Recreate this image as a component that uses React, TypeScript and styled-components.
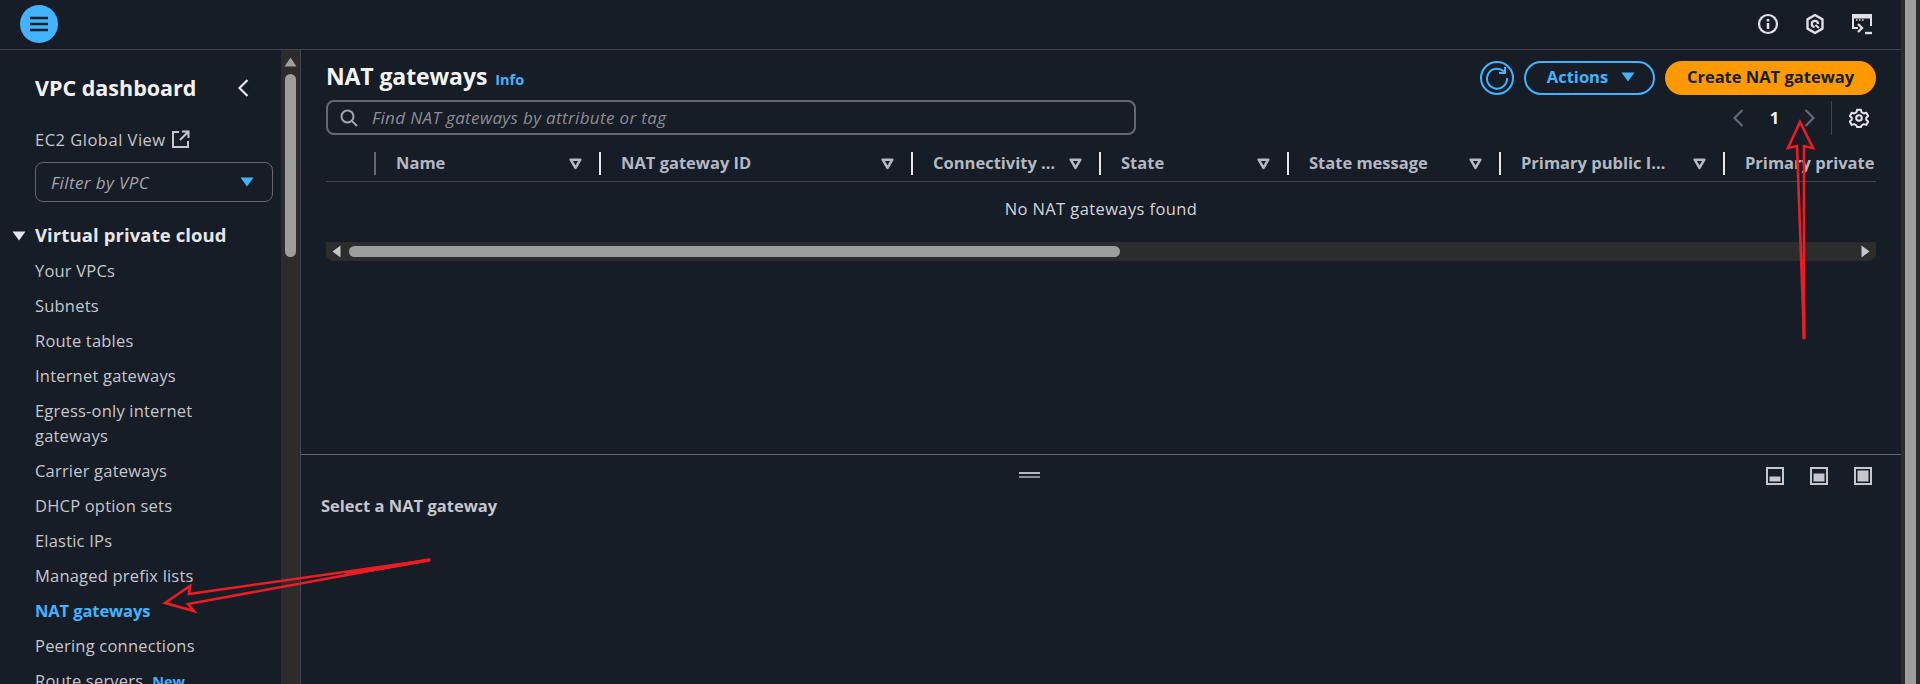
import React from "react";
import styled, { createGlobalStyle } from "styled-components";

const Global = createGlobalStyle`
  html, body { margin: 0; padding: 0; height: 684px; overflow: hidden; background: #161d26; }
  body { font-family: "Open Sans", "Noto Sans", sans-serif; color: #c6c6cd; }
  * { box-sizing: border-box; }
`;

const Page = styled.div`
  position: relative;
  display: flex;
  width: 1920px;
  height: 684px;
  overflow: hidden;
  background: #161d26;
`;
const Content = styled.div`
  flex: 1;
  min-width: 0;
  display: flex;
  flex-direction: column;
`;
const PageScroll = styled.div`
  width: 19px;
  flex: none;
  padding-left: 4px;
  background: #2c2c2c;
`;
const PageThumb = styled.div`
  width: 11px;
  height: 100%;
  background: #9e9e9e;
`;
const TopBar = styled.header`
  height: 50px;
  flex: none;
  display: flex;
  align-items: center;
  justify-content: space-between;
  padding: 0 28px 4px 20px;
  border-bottom: 1px solid #424650;
`;
const MenuButton = styled.div`
  width: 38px;
  height: 38px;
  border-radius: 50%;
  background: #42b4ff;
  display: flex;
  align-items: center;
  justify-content: center;
  margin-top: 3px;
`;
const TopIcons = styled.div`
  display: flex;
  gap: 26px;
  align-items: center;
  margin-top: 3px;
  color: #e0e0e5;
`;
const Body = styled.div`
  flex: 1;
  min-height: 0;
  display: flex;
`;
const Sidebar = styled.nav`
  width: 281px;
  flex: none;
  overflow: hidden;
  padding: 24px 8px 0 35px;
  position: relative;
`;
const SideHead = styled.div`
  display: flex;
  align-items: center;
  justify-content: space-between;
  height: 28px;
  padding-right: 24px;
`;
const SideTitle = styled.div`
  margin-top: -2px;
  font-size: 21.5px;
  font-weight: 700;
  color: #f3f3f7;
`;
const GlobalLink = styled.div`
  display: flex;
  align-items: center;
  gap: 6px;
  margin-top: 26px;
  height: 22px;
  font-size: 16.5px;
  letter-spacing: 0.5px;
`;
const FilterBox = styled.div`
  width: 238px;
  height: 40px;
  margin-top: 12px;
  border: 1px solid #656871;
  border-radius: 8px;
  display: flex;
  align-items: center;
  justify-content: space-between;
  padding: 0 17px 0 15px;
  font-style: italic;
  font-size: 17px;
  letter-spacing: 0.4px;
  color: #a4a4ad;
`;
const SectionHead = styled.div`
  display: flex;
  align-items: center;
  margin-top: 20px;
  height: 24px;
  font-size: 18.5px;
  font-weight: 700;
  letter-spacing: 0.1px;
  color: #e6e6ea;
`;
const Caret = styled.svg`
  position: absolute;
  left: 12px;
  top: 181px;
`;
const NavList = styled.div`
  margin-top: 12px;
  display: flex;
  flex-direction: column;
  gap: 10px;
`;
const NavItem = styled.div<{ $active?: boolean }>`
  line-height: 25px;
  width: 200px;
  font-size: 16.5px;
  letter-spacing: ${(p) => (p.$active ? "-0.1px" : "0.2px")};
  font-weight: ${(p) => (p.$active ? 700 : 400)};
  color: ${(p) => (p.$active ? "#42b4ff" : "#c6c6cd")};
`;
const NewTag = styled.span`
  margin-left: 9px;
  font-size: 14.5px;
  font-weight: 700;
  letter-spacing: 0;
  color: #42b4ff;
`;
const SideScroll = styled.div`
  width: 19px;
  flex: none;
  background: #2c2c2c;
  display: flex;
  flex-direction: column;
  align-items: center;
  padding-top: 7px;
`;
const SideThumb = styled.div`
  width: 11px;
  height: 183px;
  margin-top: 7px;
  border-radius: 6px;
  background: #9e9e9e;
`;
const Main = styled.main`
  flex: 1;
  min-width: 0;
  display: flex;
  flex-direction: column;
  border-left: 1px solid #424650;
`;
const ListPane = styled.section`
  height: 405px;
  flex: none;
  padding: 11px 25px 0 25px;
  display: flex;
  flex-direction: column;
  border-bottom: 1px solid #656871;
`;
const PaneTop = styled.div`
  display: flex;
  justify-content: space-between;
  align-items: flex-start;
  height: 35px;
`;
const TitleWrap = styled.div`
  display: flex;
  align-items: baseline;
  gap: 8px;
`;
const Title = styled.h1`
  margin: 0;
  font-size: 23px;
  font-weight: 700;
  letter-spacing: -0.1px;
  color: #f3f3f7;
  line-height: 30px;
`;
const InfoLink = styled.span`
  font-size: 14.5px;
  font-weight: 700;
  color: #42b4ff;
`;
const Actions = styled.div`
  display: flex;
  align-items: center;
  gap: 10px;
`;
const RefreshButton = styled.div`
  width: 34px;
  height: 34px;
  border: 2px solid #42b4ff;
  border-radius: 50%;
  display: flex;
  align-items: center;
  justify-content: center;
`;
const OutlineButton = styled.div`
  width: 131px;
  height: 34px;
  border: 2px solid #42b4ff;
  border-radius: 17px;
  display: flex;
  align-items: center;
  justify-content: center;
  gap: 12px;
  padding: 0 0 3px 4px;
  color: #42b4ff;
  font-size: 16.5px;
  font-weight: 700;
`;
const PrimaryButton = styled.div`
  width: 211px;
  height: 34px;
  border-radius: 17px;
  background: #ff9900;
  display: flex;
  align-items: center;
  justify-content: center;
  padding-bottom: 3px;
  color: #161d26;
  font-size: 16.5px;
  font-weight: 700;
`;
const ToolRow = styled.div`
  display: flex;
  justify-content: space-between;
  align-items: center;
  height: 35px;
  margin-top: 4px;
`;
const SearchBox = styled.div`
  width: 810px;
  height: 35px;
  border: 2px solid #656871;
  border-radius: 8px;
  display: flex;
  align-items: center;
  gap: 14px;
  padding-left: 12px;
  font-style: italic;
  font-size: 17px;
  letter-spacing: 0.35px;
  color: #8c8c94;
`;
const Pager = styled.div`
  display: flex;
  align-items: center;
  height: 34px;
  padding-right: 7px;
`;
const PageNum = styled.span`
  width: 60px;
  padding-left: 1px;
  text-align: center;
  font-size: 16.5px;
  font-weight: 700;
  color: #f3f3f7;
`;
const PagerDivider = styled.div`
  width: 1px;
  height: 34px;
  margin: 0 17px 0 16px;
  background: #424650;
`;
const HeaderRow = styled.div`
  display: flex;
  height: 47px;
  padding-top: 17px;
  border-bottom: 1px solid #424650;
  width: 1550px;
`;
const Cell = styled.div<{ $w: number }>`
  flex: none;
  width: ${(p) => p.$w}px;
  height: 23px;
  display: flex;
  align-items: center;
  padding-left: 20px;
  font-size: 16.5px;
  font-weight: 700;
  color: #b4b8c2;
`;
const CellLabel = styled.span`
  flex: 1;
  min-width: 0;
  margin-top: -2px;
  white-space: nowrap;
  overflow: hidden;
  text-overflow: ellipsis;
`;
const SortIcon = styled.svg<{ $gap: number }>`
  flex: none;
  margin: 0 17px 0 ${(p) => p.$gap}px;
`;
const ColDivider = styled.div<{ $dim?: boolean }>`
  flex: none;
  width: 2px;
  height: 23px;
  background: ${(p) => (p.$dim ? "#656871" : "#e6e6ea")};
  margin-left: auto;
`;
const EmptyRow = styled.div`
  height: 60px;
  width: 1550px;
  padding-bottom: 8px;
  display: flex;
  align-items: center;
  justify-content: center;
  font-size: 16.5px;
  letter-spacing: 0.4px;
  color: #d4d4d9;
`;
const HScroll = styled.div`
  width: 1550px;
  height: 19px;
  background: #2c2c2c;
  border-radius: 0 0 8px 8px;
  display: flex;
  align-items: center;
  padding: 0 6px;
`;
const HThumb = styled.div`
  width: 771px;
  height: 11px;
  margin-left: 8px;
  margin-right: auto;
  border-radius: 6px;
  background: #9e9e9e;
`;
const DetailPane = styled.section`
  flex: 1;
  min-height: 0;
  padding: 12px 29px 0 20px;
`;
const DetailTop = styled.div`
  position: relative;
  display: flex;
  justify-content: flex-end;
  gap: 26px;
  height: 18px;
`;
const Handle = styled.div`
  position: absolute;
  left: 698px;
  top: 5px;
  width: 21px;
  height: 6px;
  border-top: 2px solid #b4b8c2;
  border-bottom: 2px solid #8c8c94;
`;
const DetailTitle = styled.div`
  margin-top: 9px;
  font-size: 16.5px;
  font-weight: 700;
  color: #c6c6cd;
`;
const Overlay = styled.svg`
  position: absolute;
  inset: 0;
  pointer-events: none;
`;

const Tri = ({ color }: { color: string }) => (
  <svg width="16" height="12" viewBox="0 0 16 12"><path d="M1.5 1.5h13L8 10.5z" fill={color} /></svg>
);

const Sort = ({ gap }: { gap: number }) => (
  <SortIcon $gap={gap} width="13" height="12" viewBox="0 0 13 12">
    <path d="M1.7 1.7h9.6L6.5 9.8z" fill="none" stroke="#b4b8c2" strokeWidth="2.6" strokeLinejoin="round" />
  </SortIcon>
);

const Chevron = ({ dir, color }: { dir: "l" | "r"; color: string }) => (
  <svg width="11" height="18" viewBox="0 0 11 18">
    <path d={dir === "l" ? "M9.5 1 1.5 9l8 8" : "M1.5 1l8 8-8 8"} fill="none" stroke={color} strokeWidth="2.2" />
  </svg>
);

const PaneIcon = ({ h }: { h: number }) => (
  <svg width="18" height="18" viewBox="0 0 18 18">
    <rect x="1" y="1" width="16" height="16" fill="none" stroke="#c6c6cd" strokeWidth="2" />
    <rect x="3.5" y={14.5 - h} width="11" height={h} fill="#c6c6cd" />
  </svg>
);

const columns = [
  { w: 225, gap: 19, label: "Name" },
  { w: 312, gap: 19, label: "NAT gateway ID" },
  { w: 188, gap: 13, label: "Connectivity type" },
  { w: 188, gap: 19, label: "State" },
  { w: 212, gap: 19, label: "State message" },
  { w: 224, gap: 19, label: "Primary public IPv4 address" },
];

const navBefore = ["Your VPCs", "Subnets", "Route tables", "Internet gateways", "Egress-only internet gateways", "Carrier gateways", "DHCP option sets", "Elastic IPs", "Managed prefix lists"];

export default function App() {
  return (
    <Page>
      <Global />
      <Content>
        <TopBar>
          <MenuButton>
            <svg width="20" height="16" viewBox="0 0 20 16">
              <path d="M1 2h18M1 8h18M1 14h18" stroke="#161d26" strokeWidth="2.6" />
            </svg>
          </MenuButton>
          <TopIcons>
            <svg width="22" height="22" viewBox="0 0 22 22" fill="none" stroke="currentColor">
              <circle cx="11" cy="11" r="9" strokeWidth="2.2" />
              <path d="M11 10v6" strokeWidth="2.6" />
              <path d="M11 6v2.4" strokeWidth="2.6" />
            </svg>
            <svg width="20" height="22" viewBox="0 0 20 22" fill="none" stroke="currentColor" strokeWidth="2.4">
              <path d="M10 2l7.5 4.4v9.2L10 20l-7.5-4.4V6.4z" strokeLinejoin="round" />
              <path d="M14 15l-3.6-3" strokeWidth="2.2" />
              <path d="M13 11a3.1 3.1 0 1 0-3.4 3" strokeWidth="2.2" />
            </svg>
            <svg width="22" height="22" viewBox="0 0 22 22" fill="none" stroke="currentColor" strokeWidth="2">
              <path d="M7 15H2V2h18v11" />
              <path d="M2 4h18" strokeWidth="3" />
              <path d="M5 7h1.6M8 7h1.6M11 7h1.6" strokeWidth="1.6" />
              <path d="M7 11l4 4-4 4" strokeWidth="2.4" />
              <path d="M14 20h7" strokeWidth="2.4" />
            </svg>
          </TopIcons>
        </TopBar>
        <Body>
          <Sidebar>
            <SideHead>
              <SideTitle>VPC dashboard</SideTitle>
              <Chevron dir="l" color="#e6e6ea" />
            </SideHead>
            <GlobalLink>
              EC2 Global View
              <svg width="18" height="18" viewBox="0 0 18 18" fill="none" stroke="#c6c6cd" strokeWidth="2">
                <path d="M7 2H1v15h15v-6" />
                <path d="M8 10l8-8M10 1.5h6.5V8" />
              </svg>
            </GlobalLink>
            <FilterBox>
              Filter by VPC
              <Tri color="#42b4ff" />
            </FilterBox>
            <Caret width="14" height="10" viewBox="0 0 14 10"><path d="M0.5 0.5h13L7 9.5z" fill="#e6e6ea" /></Caret>
            <SectionHead>Virtual private cloud</SectionHead>
            <NavList>
              {navBefore.map((n) => <NavItem key={n}>{n}</NavItem>)}
              <NavItem $active>NAT gateways</NavItem>
              <NavItem>Peering connections</NavItem>
              <NavItem>Route servers<NewTag>New</NewTag></NavItem>
            </NavList>
          </Sidebar>
          <SideScroll>
            <svg width="13" height="10" viewBox="0 0 13 10"><path d="M6.5 0.5L12.5 9.5H0.5z" fill="#9e9e9e" /></svg>
            <SideThumb />
          </SideScroll>
          <Main>
            <ListPane>
              <PaneTop>
                <TitleWrap>
                  <Title>NAT gateways</Title>
                  <InfoLink>Info</InfoLink>
                </TitleWrap>
                <Actions>
                  <RefreshButton>
                    <svg width="24" height="24" viewBox="0 0 24 24" fill="none" stroke="#42b4ff" strokeWidth="2">
                      <path d="M19 5.5A10 10 0 1 0 22 12" />
                      <path d="M20 1v6h-6" />
                    </svg>
                  </RefreshButton>
                  <OutlineButton>
                    Actions
                    <Tri color="#42b4ff" />
                  </OutlineButton>
                  <PrimaryButton>Create NAT gateway</PrimaryButton>
                </Actions>
              </PaneTop>
              <ToolRow>
                <SearchBox>
                  <svg width="18" height="18" viewBox="0 0 18 18" fill="none" stroke="#a4a4ad" strokeWidth="2">
                    <circle cx="7.5" cy="7.5" r="6" />
                    <path d="M12 12l5 5" />
                  </svg>
                  Find NAT gateways by attribute or tag
                </SearchBox>
                <Pager>
                  <Chevron dir="l" color="#5f6b7a" />
                  <PageNum>1</PageNum>
                  <Chevron dir="r" color="#5f6b7a" />
                  <PagerDivider />
                  <svg width="20" height="20" viewBox="0 0 24 24" fill="none" stroke="#e6e6ea" strokeWidth="2.4" strokeLinejoin="round">
                    <circle cx="12" cy="12" r="3.4" />
                    <path d="M9.7 2h4.6l.7 3 2.7 1.6 3-.9 2.3 4-2.3 2.1v2.4l2.3 2.1-2.3 4-3-.9L15 21l-.7 1.9H9.7L9 21l-2.7-1.6-3 .9-2.3-4 2.3-2.1v-2.4L1 9.7l2.3-4 3 .9L9 5z" />
                  </svg>
                </Pager>
              </ToolRow>
              <HeaderRow>
                <Cell $w={50}><ColDivider $dim /></Cell>
                {columns.map((c) => (
                  <Cell key={c.label} $w={c.w}>
                    <CellLabel>{c.label}</CellLabel>
                    <Sort gap={c.gap} />
                    <ColDivider />
                  </Cell>
                ))}
                <Cell $w={151}><CellLabel>Primary private</CellLabel></Cell>
              </HeaderRow>
              <EmptyRow>No NAT gateways found</EmptyRow>
              <HScroll>
                <svg width="9" height="13" viewBox="0 0 9 13"><path d="M8.5 0.5v12L0.5 6.5z" fill="#c6c6cd" /></svg>
                <HThumb />
                <svg width="9" height="13" viewBox="0 0 9 13"><path d="M0.5 0.5v12L8.5 6.5z" fill="#c6c6cd" /></svg>
              </HScroll>
            </ListPane>
            <DetailPane>
              <DetailTop>
                <Handle />
                <PaneIcon h={5} />
                <PaneIcon h={8} />
                <PaneIcon h={11} />
              </DetailTop>
              <DetailTitle>Select a NAT gateway</DetailTitle>
            </DetailPane>
          </Main>
        </Body>
      </Content>
      <PageScroll><PageThumb /></PageScroll>
      <Overlay width="1920" height="684" viewBox="0 0 1920 684" fill="none" stroke="#ed1c24" strokeWidth="2.6" strokeLinejoin="miter">
        <path d="M429 560 189 594l1-8-25 17 29 8-6-7z" strokeLinecap="round" />
        <path d="M429 560l-82 14" strokeWidth="3.4" strokeLinecap="round" />
        <path d="M1804 338 1797 146l-9 2 12-26 13 26-9-2z" />
        <path d="M1804 338l-1-78" strokeWidth="3.2" strokeLinecap="round" />
      </Overlay>
    </Page>
  );
}
